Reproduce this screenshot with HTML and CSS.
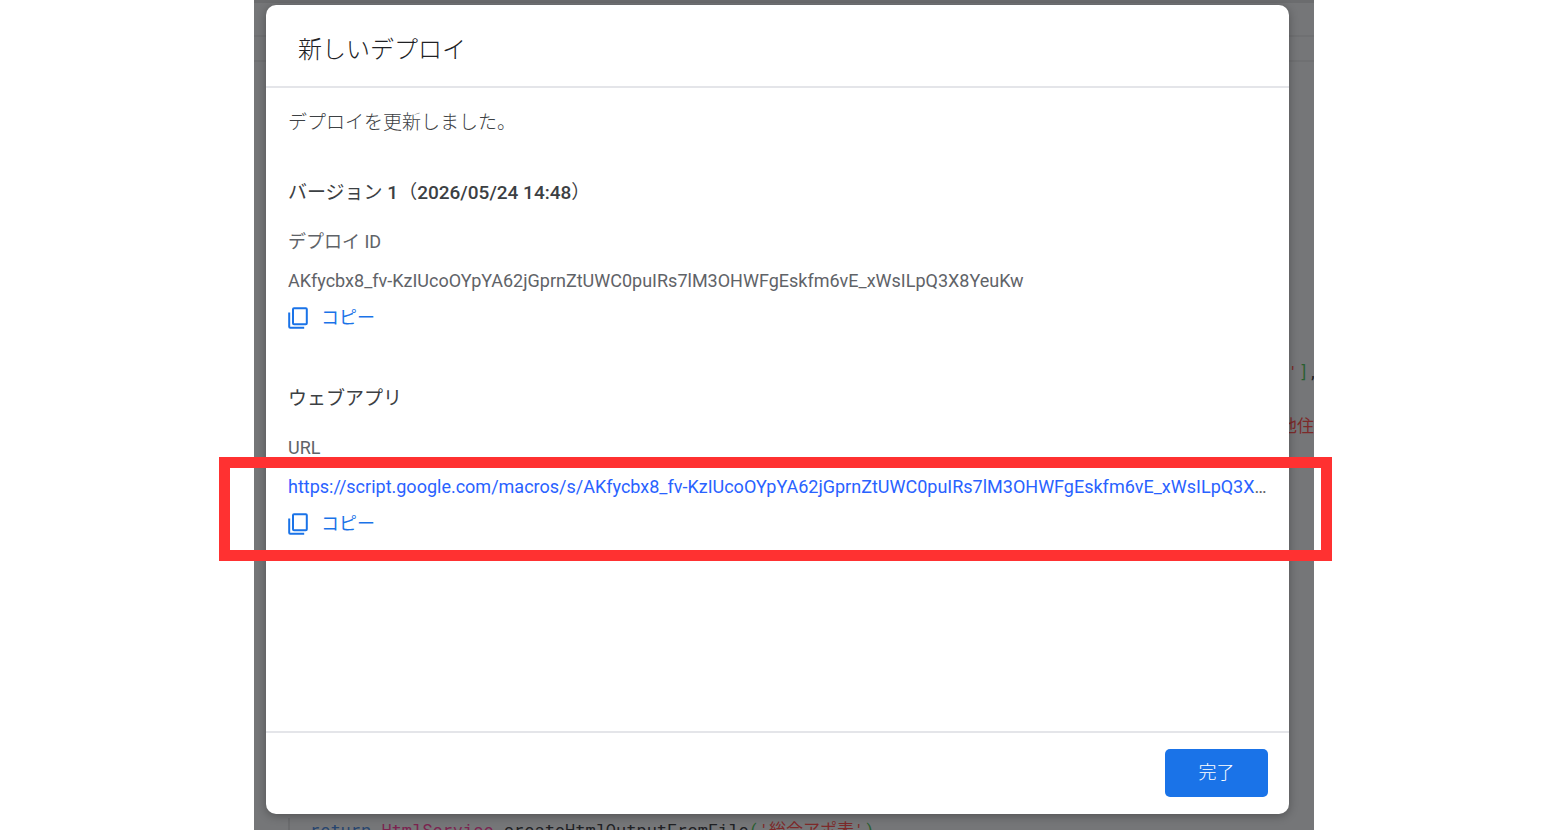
FILE: index.html
```html
<!DOCTYPE html>
<html lang="ja">
<head>
    <meta charset="UTF-8">
    <meta name="viewport" content="width=device-width, initial-scale=1.0">
    <title>新しいデプロイ</title>
    <link rel="stylesheet" href="styles.css">
</head>
<body>
    <div class="stage">
        <div class="editor" aria-hidden="true">
            <div class="toolbar"></div>
            <div class="line line-array"><span class="string">'</span><span class="bracket">]</span>,</div>
            <div class="line line-header"><span class="string">他住</span></div>
            <div class="line line-return"><span class="keyword">return</span> <span class="service">HtmlService</span>.createHtmlOutputFromFile<span class="bracket">(</span><span class="string">'総合アポ表'</span><span class="bracket">)</span></div>
        </div>

        <div class="dialog" role="dialog" aria-labelledby="dialog-title">
            <header class="dialog-header">
                <h1 id="dialog-title">新しいデプロイ</h1>
            </header>

            <main class="dialog-body">
                <p class="message">デプロイを更新しました。</p>

                <section class="group">
                    <h2>バージョン <b>1</b>（<b>2026/05/24 14:48</b>）</h2>
                    <h3>デプロイ ID</h3>
                    <div class="entry">
                        <p class="value">AKfycbx8_fv-KzIUcoOYpYA62jGprnZtUWC0puIRs7lM3OHWFgEskfm6vE_xWsILpQ3X8YeuKw</p>
                        <button class="copy" type="button">
                            <svg class="copy-icon" viewBox="0 0 20 22" aria-hidden="true">
                                <rect x="5" y="1.2" width="13.8" height="16" rx="1"/>
                                <path d="M1.2 5.5v14.3q0 1 1 1h14"/>
                            </svg>
                            コピー
                        </button>
                    </div>
                </section>

                <section class="group">
                    <h2>ウェブアプリ</h2>
                    <h3>URL</h3>
                    <div class="entry">
                        <p class="value"><a href="https://script.google.com/macros/s/AKfycbx8_fv-KzIUcoOYpYA62jGprnZtUWC0puIRs7lM3OHWFgEskfm6vE_xWsILpQ3X8YeuKw/exec">https://script.google.com/macros/s/AKfycbx8_fv-KzIUcoOYpYA62jGprnZtUWC0puIRs7lM3OHWFgEskfm6vE_xWsILpQ3X8YeuKw/exec</a></p>
                        <button class="copy" type="button">
                            <svg class="copy-icon" viewBox="0 0 20 22" aria-hidden="true">
                                <rect x="5" y="1.2" width="13.8" height="16" rx="1"/>
                                <path d="M1.2 5.5v14.3q0 1 1 1h14"/>
                            </svg>
                            コピー
                        </button>
                        <div class="highlight"></div>
                    </div>
                </section>
            </main>

            <footer class="dialog-footer">
                <button class="done" type="button">完了</button>
            </footer>
        </div>
    </div>
</body>
</html>
```
FILE: styles.css
```css
* {
    box-sizing: border-box;
}
body {
    margin: 0;
    background-color: white;
    font-family: Roboto, "Noto Sans CJK JP", sans-serif;
    font-size: 18px;
    line-height: 24px;
    color: #5f6368;
}
h1, h2, h3, p {
    margin: 0;
    font-weight: 400;
}
.stage {
    position: relative;
    display: flex;
    max-width: 1060px;
    min-height: 100vh;
    margin: 0 auto;
    padding: 5px 25px 16px 12px;
    background-color: #757678;
}

/* dimmed code editor behind the dialog */
.editor {
    position: absolute;
    inset: 0;
    overflow: hidden;
    font-family: "Roboto Mono", "DejaVu Sans Mono", "Noto Sans CJK JP", monospace;
    font-size: 17px;
    color: #202124;
}
.toolbar {
    height: 62px;
    border-top: 3px solid #6b6c6e;
    border-bottom: 2px solid #6f7072;
    background: linear-gradient(#6f7072, #6f7072) 0 32px / 100% 2px no-repeat;
}
.line {
    position: absolute;
    white-space: nowrap;
}
.line-array {
    top: 360px;
    left: 1034px;
}
.line-header {
    top: 414px;
    right: 0;
}
.line-return {
    top: 818px;
    left: 34px;
    padding-left: 20px;
    border-left: 2px solid #6b6c6e;
}
.string {
    color: #7d2a2a;
}
.bracket {
    color: #2a5f30;
}
.keyword {
    color: #27456f;
}
.service {
    color: #7c2450;
}

.dialog {
    position: relative;
    display: flex;
    flex-direction: column;
    flex: 1;
    min-width: 0;
    background-color: white;
    border-radius: 10px;
    box-shadow: 0 2px 10px rgba(0, 0, 0, 0.3);
}
.dialog-header {
    padding: 29px 32px 20px;
    border-bottom: 2px solid #e4e5e9;
}
.dialog-header h1 {
    font-size: 24px;
    font-weight: 300;
    line-height: 32px;
    color: #202124;
}
.dialog-body {
    flex: 1;
    padding: 23px 21px 48px 22px;
}
.group {
    margin-top: 57px;
}
.message + .group {
    margin-top: 46px;
}
.group h2 {
    font-size: 19px;
    color: #3c4043;
}
.group h2 b {
    font-weight: 500;
}
.message {
    font-size: 19px;
    font-weight: 300;
    color: #3c4043;
}
.group h3 {
    margin-top: 25px;
    font-size: 18px;
}
.entry {
    position: relative;
    margin-top: 15px;
}
.value {
    overflow: hidden;
    white-space: nowrap;
    text-overflow: ellipsis;
}
.value a {
    color: #2962ff;
    text-decoration: none;
}
button {
    border: none;
    font-family: inherit;
    font-size: 18px;
    font-weight: 400;
    line-height: 24px;
    cursor: pointer;
}
.copy {
    display: flex;
    align-items: center;
    gap: 13px;
    margin-top: 13px;
    padding: 0;
    background: none;
    color: #1a73e8;
}
.copy-icon {
    width: 20px;
    height: 22px;
    fill: none;
    stroke: #1a73e8;
    stroke-width: 2;
}
.highlight {
    position: absolute;
    inset: -18px -64px -25px -69px;
    border: 11px solid #ff3131;
    pointer-events: none;
}
.dialog-footer {
    display: flex;
    justify-content: flex-end;
    padding: 16px 21px 17px;
    border-top: 2px solid #e4e5e9;
}
.done {
    min-width: 103px;
    padding: 12px 24px;
    border-radius: 5px;
    background-color: #1a73e8;
    font-weight: 300;
    color: white;
}
```
